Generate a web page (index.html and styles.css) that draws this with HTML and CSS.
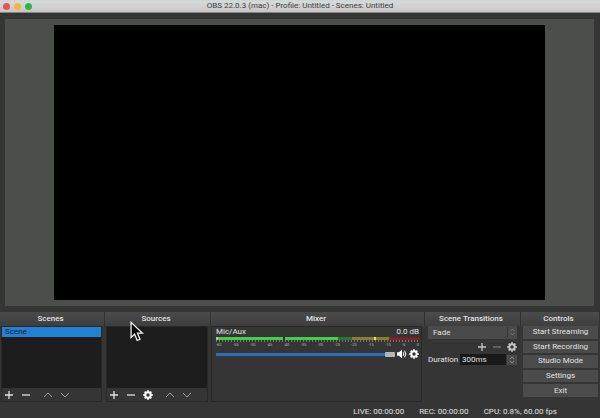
FILE: index.html
```html
<!DOCTYPE html>
<html lang="en">
<head>
    <meta charset="UTF-8">
    <meta name="viewport" content="width=device-width, initial-scale=1.0">
    <title>OBS 22.0.3 (mac)</title>
    <link rel="stylesheet" href="styles.css">
</head>
<body>

<!-- Shared icons -->
<svg class="sprite" aria-hidden="true">
    <symbol id="plus" viewBox="0 0 10 10"><path d="M5 1v8M1 5h8" fill="none" stroke="currentColor" stroke-width="1.3"/></symbol>
    <symbol id="minus" viewBox="0 0 10 10"><path d="M1 5h8" fill="none" stroke="currentColor" stroke-width="1.3"/></symbol>
    <symbol id="up" viewBox="0 0 10 10"><path d="M1 7l4-4 4 4" fill="none" stroke="currentColor"/></symbol>
    <symbol id="down" viewBox="0 0 10 10"><path d="M1 3l4 4 4-4" fill="none" stroke="currentColor"/></symbol>
    <symbol id="gear" viewBox="0 0 10 10">
        <circle cx="5" cy="5" r="2.7" fill="none" stroke="currentColor" stroke-width="1.9"/>
        <path d="M5 .3v1.6M5 8.1v1.6M.3 5h1.6M8.1 5h1.6M1.7 1.7l1.1 1.1M7.2 7.2l1.1 1.1M8.3 1.7L7.2 2.8M2.8 7.2L1.7 8.3" stroke="currentColor" stroke-width="1.8"/>
    </symbol>
    <symbol id="speaker" viewBox="0 0 10 10">
        <path d="M0 3.3h2L5 .8v8.4L2 6.7H0z" fill="currentColor"/>
        <path d="M6.2 3.2q1.4 1.8 0 3.6M7.5 1.7q2.8 3.3 0 6.6" fill="none" stroke="currentColor"/>
    </symbol>
    <symbol id="updown" viewBox="0 0 8 10"><path d="M2 4l2-2 2 2M2 6l2 2 2-2" fill="none" stroke="currentColor"/></symbol>
</svg>

<header class="titlebar">
    <div class="lights">
        <span class="light red"></span>
        <span class="light yellow"></span>
        <span class="light green"></span>
    </div>
    <h1>OBS 22.0.3 (mac) - Profile: Untitled - Scenes: Untitled</h1>
</header>

<main class="preview">
    <div class="canvas"></div>
</main>

<div class="docks">
    <section class="dock">
        <h2>Scenes</h2>
        <div class="list-box">
            <ul class="list">
                <li class="selected">Scene</li>
            </ul>
            <div class="toolbar">
                <button aria-label="Add scene"><svg><use href="#plus"/></svg></button>
                <button aria-label="Remove scene"><svg><use href="#minus"/></svg></button>
                <button class="dim spaced" aria-label="Move scene up"><svg><use href="#up"/></svg></button>
                <button class="dim" aria-label="Move scene down"><svg><use href="#down"/></svg></button>
            </div>
        </div>
    </section>

    <section class="dock">
        <h2>Sources</h2>
        <div class="list-box">
            <ul class="list"></ul>
            <div class="toolbar">
                <button aria-label="Add source"><svg><use href="#plus"/></svg></button>
                <button aria-label="Remove source"><svg><use href="#minus"/></svg></button>
                <button class="bright" aria-label="Source settings"><svg><use href="#gear"/></svg></button>
                <button class="dim spaced" aria-label="Move source up"><svg><use href="#up"/></svg></button>
                <button class="dim" aria-label="Move source down"><svg><use href="#down"/></svg></button>
            </div>
        </div>
        <!-- Mouse pointer -->
        <svg class="cursor" viewBox="0 0 13 19" aria-hidden="true">
            <path d="M1 1v14l3.3-3 2.4 5.8 2.6-1.1-2.4-5.6h4.7z" fill="#000" stroke="#eee" stroke-width="1.2"/>
        </svg>
    </section>

    <section class="dock">
        <h2>Mixer</h2>
        <div class="mixer">
            <div class="channel-head">
                <label for="volume">Mic/Aux</label>
                <span>0.0 dB</span>
            </div>
            <div class="meter">
                <span class="bar level"></span>
                <span class="bar safe"></span>
                <span class="bar warn"></span>
                <span class="bar clip"></span>
                <span class="peak"></span>
                <span class="mark"></span>
                <span class="hold"></span>
            </div>
            <div class="ticks"></div>
            <div class="scale">
                <span>-60</span><span>-55</span><span>-50</span><span>-45</span><span>-40</span><span>-35</span><span>-30</span><span>-25</span><span>-20</span><span>-15</span><span>-10</span><span>-5</span><span>0</span>
            </div>
            <div class="volume-row">
                <input type="range" id="volume" min="0" max="100" value="100">
                <button aria-label="Mute"><svg><use href="#speaker"/></svg></button>
                <button aria-label="Audio settings"><svg><use href="#gear"/></svg></button>
            </div>
        </div>
    </section>

    <section class="dock">
        <h2>Scene Transitions</h2>
        <div class="transitions">
            <div class="select-wrap">
                <select aria-label="Transition">
                    <option>Fade</option>
                </select>
                <svg class="arrows"><use href="#updown"/></svg>
            </div>
            <div class="transition-tools">
                <button aria-label="Add transition"><svg><use href="#plus"/></svg></button>
                <button class="off" aria-label="Remove transition"><svg><use href="#minus"/></svg></button>
                <button aria-label="Transition settings"><svg><use href="#gear"/></svg></button>
            </div>
            <div class="duration">
                <label for="duration">Duration</label>
                <input type="text" id="duration" value="300ms">
                <button class="spin" aria-label="Change duration"><svg><use href="#updown"/></svg></button>
            </div>
        </div>
    </section>

    <section class="dock">
        <h2>Controls</h2>
        <div class="controls">
            <button>Start Streaming</button>
            <button>Start Recording</button>
            <button>Studio Mode</button>
            <button>Settings</button>
            <button>Exit</button>
        </div>
    </section>
</div>

<footer class="statusbar">
    <span>LIVE: 00:00:00</span>
    <span>REC: 00:00:00</span>
    <span>CPU: 0.8%, 60.00 fps</span>
</footer>

</body>
</html>
```

FILE: styles.css
```css
* {
    box-sizing: border-box;
}

body {
    margin: 0;
    min-height: 100vh;
    display: flex;
    flex-direction: column;
    background-color: #353535;
    color: #e2e2e2;
    font-family: Roboto, "Liberation Sans", sans-serif;
    font-size: 8px;
    line-height: 10px;
}

h1, h2, ul {
    margin: 0;
    padding: 0;
    font-size: 8px;
}

button, input, select {
    margin: 0;
    padding: 0;
    border: 0;
    border-radius: 0;
    background: none;
    color: inherit;
    font: inherit;
}

svg {
    display: block;
    width: 10px;
    height: 10px;
}

.sprite {
    position: absolute;
    width: 0;
    height: 0;
}

/* Title bar */
.titlebar {
    display: grid;
    grid-template-columns: 1fr auto 1fr;
    align-items: center;
    height: 13px;
    padding: 0 3px;
    background: linear-gradient(#c9d5da, #d9d9d9 2px, #c6c6c6);
    border-bottom: 1px solid #858585;
}

.titlebar h1 {
    color: #3c3c3c;
    font-weight: 400;
}

.lights {
    display: flex;
    gap: 4px;
}

.light {
    width: 7px;
    height: 7px;
    border-radius: 50%;
}

.red {
    background-color: #ee5148;
}

.yellow {
    background-color: #f5b53a;
}

.green {
    background-color: #27bd3c;
}

/* Preview */
.preview {
    flex: 1;
    display: flex;
    justify-content: center;
    align-items: center;
    margin: 6px 6px 6px 5px;
    padding: 5px 0;
    background-color: #4c4e4b;
}

.canvas {
    width: 83.2%;
    aspect-ratio: 16 / 9;
    background-color: #000;
}

/* Docks */
.docks {
    display: grid;
    grid-template-columns: 105fr 106fr 214fr 96fr 79fr;
    height: 90px;
}

.dock {
    position: relative;
    display: flex;
    flex-direction: column;
    min-width: 0;
}

.dock h2 {
    height: 14px;
    padding-right: 3px;
    line-height: 13px;
    text-align: center;
    font-weight: 500;
    background: linear-gradient(#4a4b4a, #3d3e3d);
    border-right: 1px solid #303030;
}

.list-box {
    flex: 1;
    display: flex;
    flex-direction: column;
    margin: 0 3px 0 1px;
    border: 1px solid #292929;
}

.list {
    flex: 1;
    list-style-type: none;
    background-color: #1d1d1d;
}

.selected {
    padding-left: 3px;
    background-color: #2380d2;
    color: #0c1e30;
}

.toolbar {
    display: flex;
    align-items: center;
    gap: 7px;
    height: 13px;
    padding-left: 2px;
}

.dim {
    color: #a0a0a0;
}

.bright {
    color: #fff;
}

.spaced {
    margin-left: 5px;
}

.cursor {
    position: absolute;
    left: 24%;
    top: 9px;
    width: 14px;
    height: 21px;
}

/* Mixer */
.mixer {
    flex: 1;
    margin-right: 3px;
    padding: 0 2px 0 4px;
    border: 1px solid #292929;
}

.channel-head {
    display: flex;
    justify-content: space-between;
}

.meter {
    position: relative;
    display: flex;
    height: 3px;
}

.bar {
    height: 3px;
}

.level {
    width: 60%;
    background-color: #42cf45;
}

.safe {
    width: 7%;
    background-color: #247a26;
}

.warn {
    width: 18%;
    background-color: #8b7d29;
}

.clip {
    width: 15%;
    background-color: #7d2324;
}

.peak, .mark, .hold {
    position: absolute;
    top: 0;
    width: 2px;
    height: 3px;
}

.peak {
    left: 0;
    background-color: #e0b08c;
}

.mark {
    left: 33%;
    background-color: #143d16;
}

.hold {
    left: 78%;
    background-color: #f0db4c;
}

.ticks {
    height: 2px;
    background: repeating-linear-gradient(90deg, #777 0 1px, transparent 1px 3px);
}

.scale {
    display: flex;
    justify-content: space-between;
    color: #b2b2b2;
    font-size: 4px;
    line-height: 5px;
}

.volume-row {
    display: flex;
    align-items: center;
    gap: 2px;
    margin-top: 2px;
    color: #fff;
}

.volume-row input {
    flex: 1;
    min-width: 0;
    height: 5px;
    appearance: none;
    background: linear-gradient(#2a6fba, #2a6fba) center / 100% 3px no-repeat;
}

.volume-row input::-webkit-slider-thumb {
    appearance: none;
    width: 10px;
    height: 5px;
    border-radius: 1px;
    background-color: #b5b5b5;
}

/* Transitions */
.transitions {
    display: flex;
    flex-direction: column;
    padding: 0 4px 0 3px;
}

.select-wrap {
    position: relative;
    height: 13px;
}

.select-wrap select {
    width: 100%;
    height: 13px;
    padding-left: 5px;
    appearance: none;
    background-color: #4a4a4a;
}

.arrows {
    position: absolute;
    right: 0;
    top: 1px;
    width: 10px;
    border-left: 1px solid #353535;
    color: #777;
}

.transition-tools {
    display: flex;
    justify-content: flex-end;
    gap: 5px;
    padding: 3px 0 2px;
    color: #c4c4c4;
}

.off {
    color: #777;
}

.duration {
    display: flex;
    align-items: center;
    gap: 1px;
}

.duration input {
    flex: 1;
    min-width: 0;
    height: 11px;
    margin-left: 1px;
    padding-left: 2px;
    background-color: #191919;
}

.spin {
    background-color: #4a4a4a;
    color: #888;
}

/* Controls */
.controls {
    flex: 1;
    display: flex;
    flex-direction: column;
    gap: 2px;
    padding: 0 2px 5px;
}

.controls button {
    flex: 1;
    background-color: #4b4b4b;
    line-height: 10px;
}

/* Status bar */
.statusbar {
    display: flex;
    justify-content: flex-end;
    gap: 15px;
    height: 16px;
    padding: 5px 43px 0 0;
    line-height: 10px;
}
```
